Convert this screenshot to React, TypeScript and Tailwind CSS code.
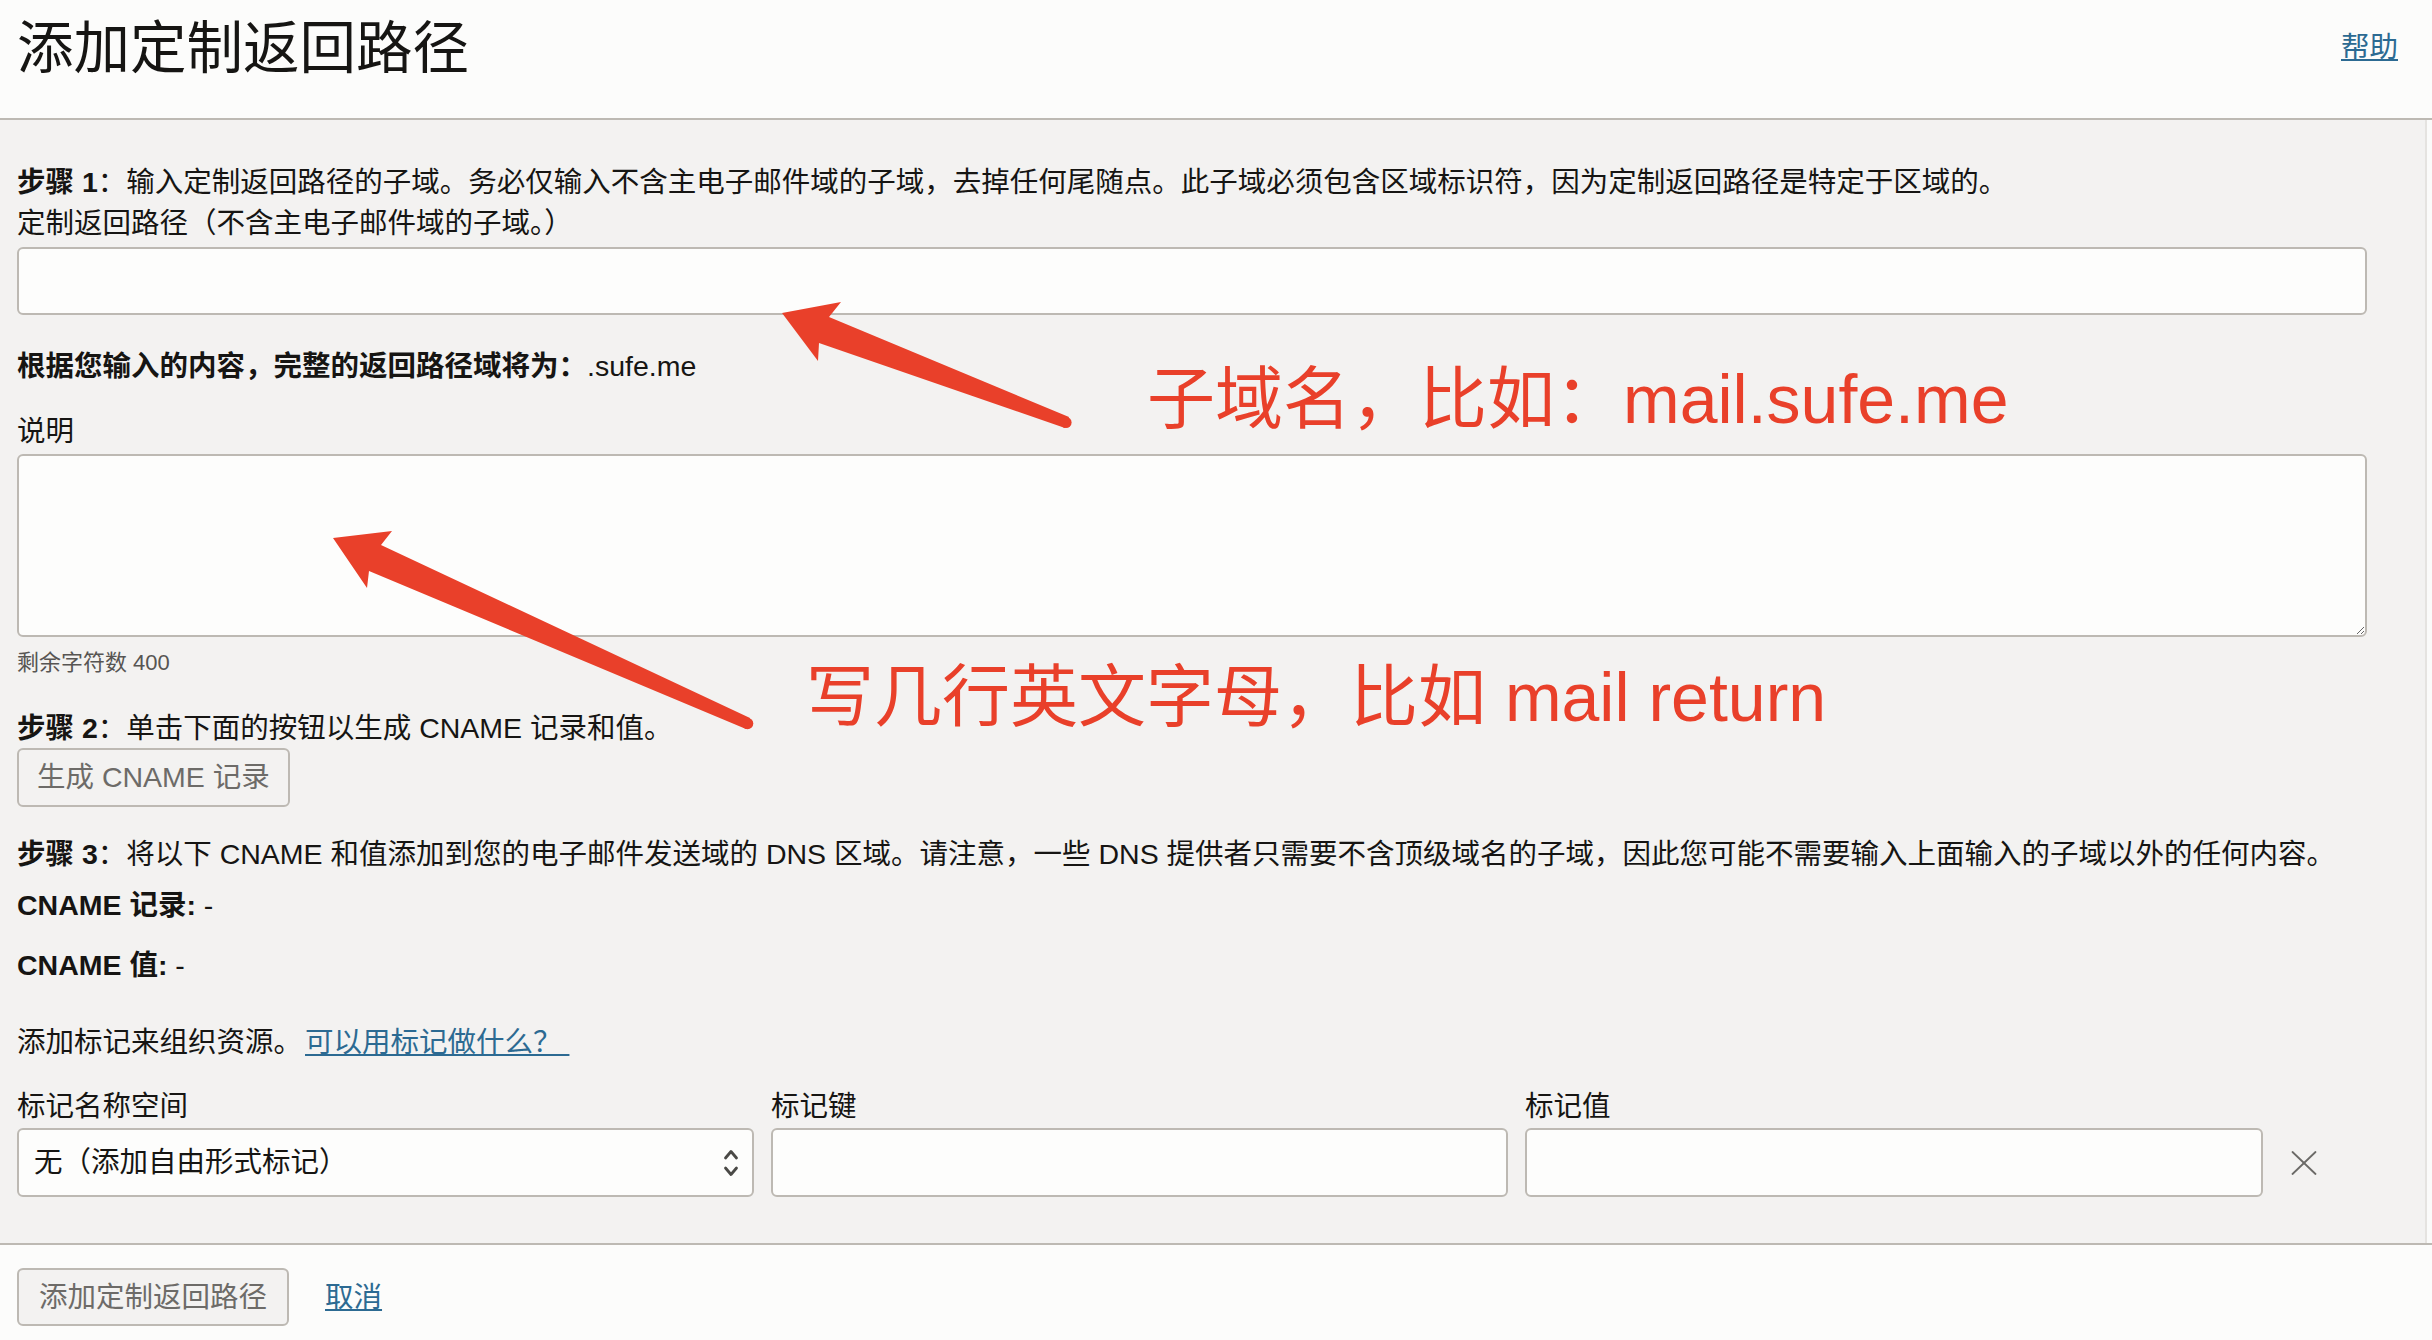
import React from 'react';

const FieldInput: React.FC<{ className?: string }> = ({ className = '' }) => (
    <input
        type="text"
        className={`block bg-[#fdfdfc] border-2 border-[#bdb9b3] rounded-[6px] outline-none px-[16px] ${className}`}
    />
);

const Row: React.FC<{ className?: string, children: React.ReactNode }> = ({ className = '', children }) => (
    <div className={`h-[41px] leading-[43px] whitespace-nowrap ${className}`}>{children}</div>
);

const Chevrons: React.FC = () => (
    <svg width="16" height="30" viewBox="0 0 16 30" fill="none" stroke="#4a4946" strokeWidth="2.8" strokeLinecap="round" strokeLinejoin="round">
        <polyline points="2.5,10 8,3.5 13.5,10" />
        <polyline points="2.5,20 8,26.5 13.5,20" />
    </svg>
);

const CloseIcon: React.FC = () => (
    <svg width="26" height="24" viewBox="0 0 26 24" fill="none" stroke="#6b6a67" strokeWidth="1.8" strokeLinecap="round">
        <line x1="1.5" y1="1" x2="24.5" y2="23" />
        <line x1="24.5" y1="1" x2="1.5" y2="23" />
    </svg>
);

// red markup drawn over the screenshot
const Annotations: React.FC = () => (
    <div className="absolute inset-0 pointer-events-none">
        <svg width="2432" height="1340" viewBox="0 0 2432 1340" className="absolute left-0 top-0">
            <g fill="#e9402a">
                <polygon points="782,313 841,302 829,317 1069,417 1065,428 819,343 818,361" />
                <circle cx="1066" cy="422.5" r="5.6" />
                <polygon points="333,538 392,531 381,545 750,718 746,729 369,571 367,588" />
                <circle cx="747.5" cy="723.5" r="5.8" />
            </g>
        </svg>
        <div className="absolute left-[1147px] top-[365px] text-[68px] leading-[68px] text-[#e9402a] whitespace-nowrap">
            子域名，比如：mail.sufe.me
        </div>
        <div className="absolute left-[806px] top-[663px] text-[68px] leading-[68px] text-[#e9402a] whitespace-nowrap">
            写几行英文字母，比如 mail return
        </div>
    </div>
);

const App: React.FC = () => {
    return (
        <div className="relative w-[2432px] h-[1340px] overflow-hidden bg-[#fcfcfb] text-[#161513] text-[28.5px] font-['Liberation_Sans','Noto_Sans_CJK_SC',sans-serif]">
            <header className="h-[120px] border-b-2 border-[#bdb9b3] flex items-start justify-between pl-[17px] pr-[34px] pt-[19px]">
                <h1 className="text-[56.5px] leading-[60px] font-normal">添加定制返回路径</h1>
                <a href="#" className="mt-[8px] leading-[41px] text-[#2c6a92] underline">帮助</a>
            </header>

            <div className="flex h-[1123px] bg-[#f3f2f1]">
                <main className="flex-1 flex flex-col pl-[17px] pr-[58px] pt-[41px]">
                    <Row>
                        <span className="font-bold">步骤 1</span>：输入定制返回路径的子域。务必仅输入不含主电子邮件域的子域，去掉任何尾随点。此子域必须包含区域标识符，因为定制返回路径是特定于区域的。
                    </Row>
                    <Row>定制返回路径（不含主电子邮件域的子域。）</Row>
                    <FieldInput className="mt-[4px] h-[68px] w-full" />

                    <Row className="mt-[30px]">
                        <span className="font-bold">根据您输入的内容，完整的返回路径域将为：</span>.sufe.me
                    </Row>
                    <Row className="mt-[24px]">说明</Row>
                    <textarea className="block mt-[3px] h-[183px] w-full bg-[#fdfdfc] border-2 border-[#bdb9b3] rounded-[6px] outline-none resize" />
                    <div className="mt-[10px] h-[30px] leading-[32px] text-[22px] text-[#575553]">剩余字符数 400</div>

                    <Row className="mt-[30px]">
                        <span className="font-bold">步骤 2</span>：单击下面的按钮以生成 CNAME 记录和值。
                    </Row>
                    <button className="self-start h-[59px] px-[18px] border-2 border-[#bdb9b3] rounded-[6px] text-[#6d6b68] bg-transparent">
                        生成 CNAME 记录
                    </button>

                    <Row className="mt-[26px]">
                        <span className="font-bold">步骤 3</span>：将以下 CNAME 和值添加到您的电子邮件发送域的 DNS 区域。请注意，一些 DNS 提供者只需要不含顶级域名的子域，因此您可能不需要输入上面输入的子域以外的任何内容。
                    </Row>
                    <Row className="mt-[10px]"><span className="font-bold">CNAME 记录:</span> -</Row>
                    <Row className="mt-[19px]"><span className="font-bold">CNAME 值:</span> -</Row>

                    <Row className="mt-[36px]">
                        添加标记来组织资源。<a href="#" className="ml-[3px] text-[#2c6a92] underline">可以用标记做什么？&nbsp;</a>
                    </Row>

                    <div className="mt-[23px] flex gap-[17px]">
                        <Row className="w-[737px]">标记名称空间</Row>
                        <Row className="w-[737px]">标记键</Row>
                        <Row className="w-[738px]">标记值</Row>
                    </div>
                    <div className="mt-[2px] flex items-center gap-[17px]">
                        <div className="w-[737px] h-[69px] flex items-center justify-between pl-[15px] pr-[13px] bg-[#fdfdfc] border-2 border-[#bdb9b3] rounded-[6px]">
                            <span className="whitespace-nowrap leading-[43px]">无（添加自由形式标记）</span>
                            <Chevrons />
                        </div>
                        <FieldInput className="w-[737px] h-[69px]" />
                        <FieldInput className="w-[738px] h-[69px]" />
                        <button className="ml-[11px] flex items-center" aria-label="删除标记">
                            <CloseIcon />
                        </button>
                    </div>
                </main>
                <div className="w-[7px] border-l-2 border-[#e5e3e0] bg-[#fbfbfa]" />
            </div>

            <footer className="h-[97px] border-t-2 border-[#bdb9b3] flex items-start gap-[36px] pl-[17px] pt-[23px]">
                <button className="h-[58px] px-[20px] border-2 border-[#bdb9b3] rounded-[6px] bg-[#f3f2f1] text-[#6d6b68] whitespace-nowrap leading-[43px]">
                    添加定制返回路径
                </button>
                <a href="#" className="mt-[9px] leading-[41px] text-[#2c6a92] underline">取消</a>
            </footer>

            <Annotations />
        </div>
    );
};

export default App;
